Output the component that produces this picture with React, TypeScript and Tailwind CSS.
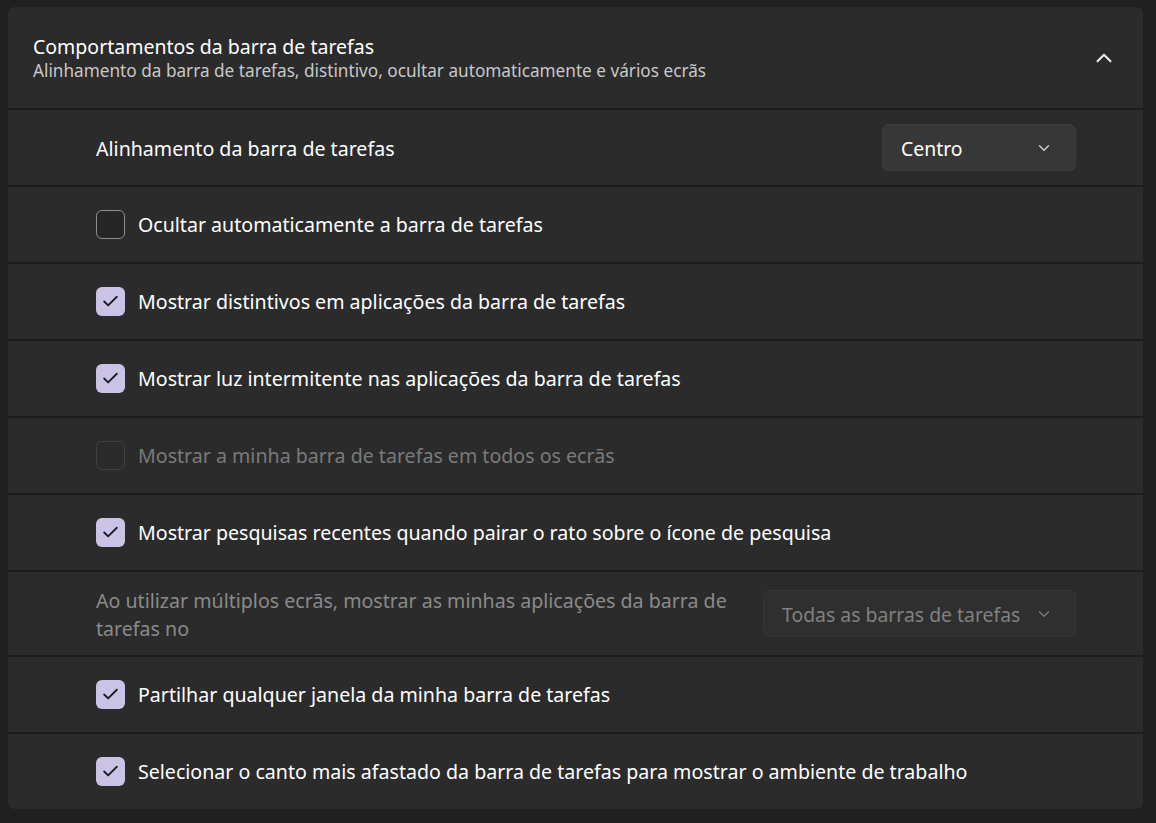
import { Check, ChevronDown, ChevronUp } from 'lucide-react'

type Row =
  | { kind: 'check'; label: string; checked: boolean; disabled?: boolean }
  | { kind: 'select'; label: string; value: string; disabled?: boolean; wide?: boolean }

const ROWS: Row[] = [
  { kind: 'select', label: 'Alinhamento da barra de tarefas', value: 'Centro' },
  { kind: 'check', label: 'Ocultar automaticamente a barra de tarefas', checked: false },
  { kind: 'check', label: 'Mostrar distintivos em aplicações da barra de tarefas', checked: true },
  { kind: 'check', label: 'Mostrar luz intermitente nas aplicações da barra de tarefas', checked: true },
  { kind: 'check', label: 'Mostrar a minha barra de tarefas em todos os ecrãs', checked: false, disabled: true },
  { kind: 'check', label: 'Mostrar pesquisas recentes quando pairar o rato sobre o ícone de pesquisa', checked: true },
  {
    kind: 'select',
    label: 'Ao utilizar múltiplos ecrãs, mostrar as minhas aplicações da barra de tarefas no',
    value: 'Todas as barras de tarefas',
    disabled: true,
    wide: true,
  },
  { kind: 'check', label: 'Partilhar qualquer janela da minha barra de tarefas', checked: true },
  { kind: 'check', label: 'Selecionar o canto mais afastado da barra de tarefas para mostrar o ambiente de trabalho', checked: true },
]

function Checkbox({ checked, disabled }: { checked: boolean; disabled?: boolean }) {
  if (checked) {
    return (
      <span className="flex h-[29px] w-[29px] shrink-0 items-center justify-center rounded-[6px] bg-[#cbc3e6]">
        <Check className="h-[19px] w-[19px] text-[#1b1a1f]" strokeWidth={2.3} />
      </span>
    )
  }
  return (
    <span
      className={`h-[29px] w-[29px] shrink-0 rounded-[6px] border-[1.5px] ${
        disabled ? 'border-[#414141] bg-[#2b2b2b]' : 'border-[#8d8d8d] bg-[#262626]'
      }`}
    />
  )
}

export default function App() {
  return (
    <div
      className="min-h-[823px] w-[1156px] bg-[#202020] pl-[8px] pt-[7px]"
      style={{ fontFamily: '"Noto Sans", "Open Sans", sans-serif' }}
    >
      <div className="flex w-[1135px] flex-col gap-[2px] overflow-hidden rounded-[6px] bg-[#1c1c1c]">
        {/* Header */}
        <div className="flex h-[101px] items-center justify-between bg-[#2b2b2b] pl-[25px] pr-[26px]">
          <div className="flex flex-col">
            <span className="text-[19.5px] leading-[26px] text-[#ffffff]">Comportamentos da barra de tarefas</span>
            <span className="text-[17.2px] leading-[22px] text-[#c8c8c8]">
              Alinhamento da barra de tarefas, distintivo, ocultar automaticamente e vários ecrãs
            </span>
          </div>
          <ChevronUp className="h-[26px] w-[26px] text-[#ececec]" strokeWidth={1.9} />
        </div>

        {ROWS.map((row, i) => (
          <div
            key={i}
            className={`flex items-center justify-between bg-[#2b2b2b] pl-[88px] pr-[67px] ${
              row.kind === 'select' && row.wide ? 'h-[83px]' : 'h-[75px]'
            }`}
          >
            {row.kind === 'check' ? (
              <div className="flex items-center gap-[13px]">
                <Checkbox checked={row.checked} disabled={row.disabled} />
                <span className={`text-[19.6px] ${row.disabled ? 'text-[#7a7a7a]' : 'text-[#ffffff]'}`}>{row.label}</span>
              </div>
            ) : (
              <>
                <span
                  className={`pt-[2px] text-[19.6px] leading-[28px] ${
                    row.disabled ? 'max-w-[660px] text-[#8a8a8a]' : 'text-[#ffffff]'
                  }`}
                >
                  {row.label}
                </span>
                <div
                  className={`flex h-[47px] items-center justify-between rounded-[6px] border pl-[18px] pr-[22px] ${
                    row.disabled
                      ? 'w-[313px] border-[#363636] bg-[#2f2f2f] text-[#808080]'
                      : 'w-[194px] border-[#3d3d3d] bg-[#373737] text-[#ffffff]'
                  }`}
                >
                  <span className="pt-[2px] text-[19.4px]">{row.value}</span>
                  <ChevronDown
                    className={`h-[18px] w-[18px] ${row.disabled ? 'text-[#7c7c7c]' : 'text-[#d0d0d0]'}`}
                    strokeWidth={1.8}
                  />
                </div>
              </>
            )}
          </div>
        ))}
      </div>
    </div>
  )
}
